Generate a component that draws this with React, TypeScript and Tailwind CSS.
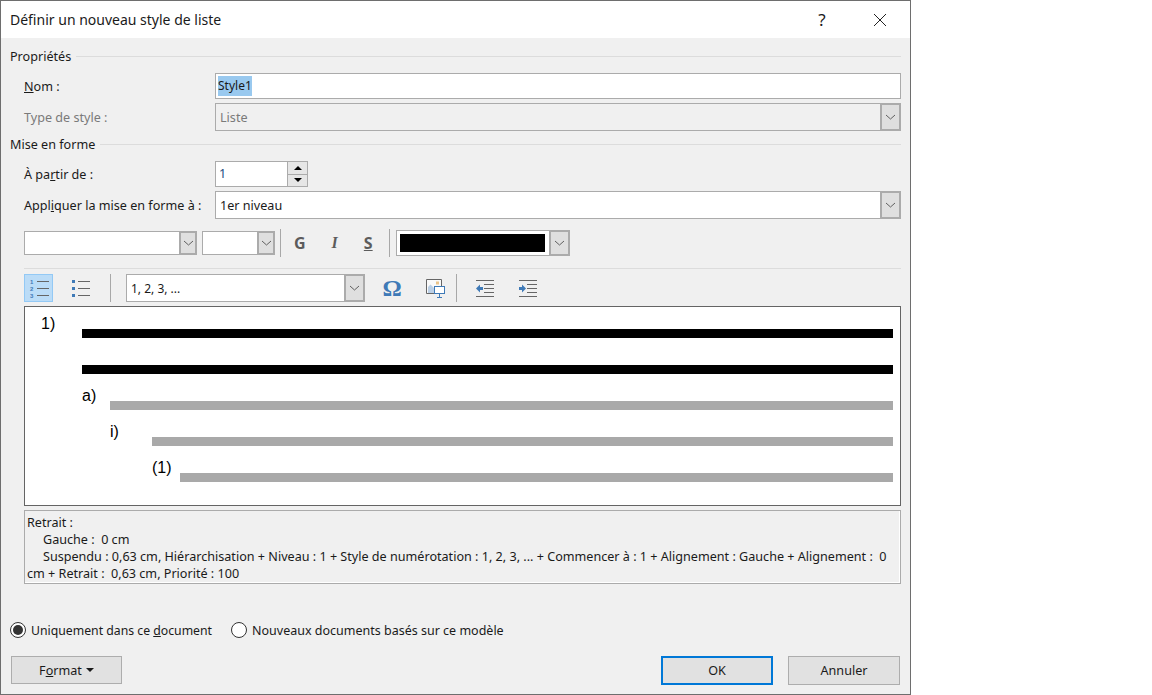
import React from "react";

const font = "[font-family:'Noto_Sans',sans-serif]";

const Chevron = () => (
    <svg width="11" height="6" viewBox="0 0 11 6" fill="none">
        <path d="M1 1l4.5 4L10 1" stroke="#606060" strokeWidth="1" />
    </svg>
);

const Combo = ({
    value,
    className = "",
    disabled = false,
    btn = "w-[20px]",
}: {
    value?: React.ReactNode;
    className?: string;
    disabled?: boolean;
    btn?: string;
}) => (
    <div
        className={`flex items-stretch border border-[#ababab] ${
            disabled ? "bg-[#f0f0f0] text-[#7a7a7a]" : "bg-white text-[#1a1a1a]"
        } ${className}`}
    >
        <div className="flex flex-1 items-center pl-[4px] pt-[2px] min-w-0 truncate">{value}</div>
        <div
            className={`flex items-center justify-center bg-[#dfdfdf] border-l-2 border-y border-r border-[#ababab] ${btn}`}
        >
            <Chevron />
        </div>
    </div>
);

const GroupHeader = ({ title, mt }: { title: string; mt: string }) => (
    <div className={`flex items-center h-[18px] gap-[5px] ${mt}`}>
        <span className="text-[#1a1a1a] pt-[2px]">{title}</span>
        <div className="flex-1 h-px bg-[#dcdcdc]" />
    </div>
);

const VSep = ({ h = "h-[28px]" }: { h?: string }) => <div className={`w-px bg-[#a8a8a8] ${h}`} />;

const Radio = ({ checked }: { checked?: boolean }) => (
    <div className="flex items-center justify-center w-[16px] h-[16px] rounded-full border border-[#333] bg-white">
        {checked && <div className="w-[10px] h-[10px] rounded-full bg-[#333]" />}
    </div>
);

const NumberedIcon = () => (
    <svg width="24" height="22" viewBox="0 0 24 22" fill="none">
        <text x="3" y="6.5" fontSize="6" fontWeight="700" fill="#3f7ab7" fontFamily="Liberation Sans">1</text>
        <text x="3" y="13.5" fontSize="6" fontWeight="700" fill="#3f7ab7" fontFamily="Liberation Sans">2</text>
        <text x="3" y="20.5" fontSize="6" fontWeight="700" fill="#3f7ab7" fontFamily="Liberation Sans">3</text>
        <path d="M10 4.5h12M10 11.5h12M10 18.5h12" stroke="#666" />
    </svg>
);

const BulletIcon = () => (
    <svg width="20" height="22" viewBox="0 0 20 22" fill="none">
        <path d="M1 3h3v3H1zM1 10h3v3H1zM1 17h3v3H1z" fill="#3f7ab7" />
        <path d="M7 4.5h12M7 11.5h12M7 18.5h12" stroke="#666" />
    </svg>
);

const PictureIcon = () => (
    <svg width="19" height="19" viewBox="0 0 19 19" fill="none">
        <path d="M.5.5h15v14H.5z" fill="#fafafa" stroke="#666" />
        <path d="M2 14V8l2.5-2.5L7 8l1 1v5z" fill="#bcd0e6" />
        <rect x="10" y="2.5" width="3" height="3" fill="#eac48a" />
        <rect x="8.5" y="7.5" width="10" height="7" fill="#fff" stroke="#3f7ab7" />
        <path d="M13.5 15v3M11 18.5h5" stroke="#3f7ab7" />
    </svg>
);

const IndentIcon = ({ flip }: { flip?: boolean }) => (
    <svg width="18" height="17" viewBox="0 0 18 17" fill="none">
        <path d="M0 .5h18M8 4.5h10M8 8.5h10M8 12.5h10M0 16.5h18" stroke="#666" />
        {flip ? (
            <path d="M0 7h3V4.5L7 8.5l-4 4V10H0z" fill="#3f7ab7" />
        ) : (
            <path d="M7 7H4V4.5L0 8.5l4 4V10h3z" fill="#3f7ab7" />
        )}
    </svg>
);

const PreviewRow = ({
    label,
    labelBox,
    bar,
}: {
    label: string;
    labelBox: string;
    bar: string;
}) => (
    <div className="flex h-[27px]">
        <div className={`${labelBox} h-[26px] leading-[26px] text-[16px] text-black [font-family:'Liberation_Sans',sans-serif]`}>
            {label}
        </div>
        <div className={`flex-1 h-[9px] self-end ${bar}`} />
    </div>
);

export default function App() {
    return (
        <div className={`w-[1152px] h-[695px] bg-white text-[12.6px] ${font}`}>
            <div className="flex flex-col w-[911px] h-[695px] border border-[#6e6e6e] bg-[#f0f0f0] text-[#1a1a1a]">
                <div className="flex items-center justify-between h-[37px] shrink-0 bg-white pl-[9px]">
                    <span className="text-[14px]">Définir un nouveau style de liste</span>
                    <div className="flex items-center">
                        <span className="text-[17px] w-[18px] text-center">?</span>
                        <svg className="ml-[42px] mr-[23px]" width="14" height="14" viewBox="0 0 14 14" fill="none">
                            <path d="M1 1l12 12M13 1L1 13" stroke="#222" />
                        </svg>
                    </div>
                </div>

                <div className="flex flex-col flex-1 pl-[9px] pr-[9px]">
                    <GroupHeader title="Propriétés" mt="mt-[9px]" />

                    <div className="flex items-center h-[26px] mt-[8px] pl-[14px]">
                        <span className="w-[191px] pt-[2px]">
                            <span className="underline">N</span>om :
                        </span>
                        <div className="flex flex-1 items-center h-full bg-white border border-[#ababab] pl-[2px]">
                            <span className="bg-[#99c9ef] h-[20px] leading-[20px] text-[12px]">Style1</span>
                        </div>
                    </div>

                    <div className="flex items-center h-[28px] mt-[4px] pl-[14px]">
                        <span className="w-[191px] pt-[2px] text-[#7a7a7a]">Type de style :</span>
                        <Combo value="Liste" disabled className="flex-1 h-full" />
                    </div>

                    <GroupHeader title="Mise en forme" mt="mt-[4px]" />

                    <div className="flex items-center h-[26px] mt-[8px] pl-[14px]">
                        <span className="w-[191px] pt-[2px]">
                            À pa<span className="underline">r</span>tir de :
                        </span>
                        <div className="flex w-[93px] h-full bg-white border border-[#ababab]">
                            <div className="flex flex-1 items-center pl-[3px] text-[#24507f]">1</div>
                            <div className="flex flex-col w-[20px] border-l border-[#ababab]">
                                <div className="flex flex-1 items-center justify-center bg-[#e6e6e6] border-b border-[#ababab]">
                                    <div className="w-0 h-0 border-x-[4px] border-x-transparent border-b-[4px] border-b-black" />
                                </div>
                                <div className="flex flex-1 items-center justify-center bg-[#e6e6e6]">
                                    <div className="w-0 h-0 border-x-[4px] border-x-transparent border-t-[4px] border-t-black" />
                                </div>
                            </div>
                        </div>
                    </div>

                    <div className="flex items-center h-[28px] mt-[4px] pl-[14px]">
                        <span className="w-[191px] pt-[2px]">
                            Appl<span className="underline">i</span>quer la mise en forme à :
                        </span>
                        <Combo value="1er niveau" className="flex-1 h-full" />
                    </div>

                    <div className="flex items-center h-[26px] mt-[11px] pl-[14px]">
                        <Combo className="w-[173px] h-[24px]" btn="w-[17px]" />
                        <Combo className="w-[73px] h-[24px] ml-[5px]" btn="w-[17px]" />
                        <div className="ml-[5px]">
                            <VSep />
                        </div>
                        <div className="flex items-center w-[108px] pl-[13px] gap-[26px] text-[16px] font-bold text-[#5c5c5c]">
                            <span>G</span>
                            <span className="italic [font-family:'Liberation_Serif',serif]">I</span>
                            <span className="underline">S</span>
                        </div>
                        <VSep />
                        <Combo
                            className="w-[174px] h-[26px] ml-[6px]"
                            btn="w-[20px]"
                            value={<div className="w-[145px] h-[18px] bg-black ml-[-1px] mt-[-2px]" />}
                        />
                    </div>

                    <div className="h-px bg-[#dcdcdc] mt-[12px] ml-[14px]" />

                    <div className="flex items-center h-[28px] mt-[5px] pl-[14px]">
                        <div className="flex items-center justify-center w-[29px] h-full bg-[#bbdcf7] border border-[#93c9f5]">
                            <NumberedIcon />
                        </div>
                        <div className="flex justify-center w-[57px] pr-[1px]">
                            <BulletIcon />
                        </div>
                        <VSep />
                        <Combo
                            className="w-[239px] h-full ml-[15px]"
                            btn="w-[20px]"
                            value={<span className="text-[#1a1a1a] text-[12px]">1, 2, 3, ...</span>}
                        />
                        <span className="w-[54px] text-center text-[24px] leading-none font-bold text-[#3f7ab7] [font-family:'Liberation_Serif',serif]">
                            Ω
                        </span>
                        <div className="flex w-[37px] pl-[7px]">
                            <PictureIcon />
                        </div>
                        <VSep />
                        <div className="flex items-center ml-[19px] gap-[25px]">
                            <IndentIcon />
                            <IndentIcon flip />
                        </div>
                    </div>

                    <div className="flex flex-col gap-[9px] h-[200px] mt-[4px] ml-[14px] pt-[4px] pr-[7px] bg-white border border-[#646464]">
                        <PreviewRow label="1)" labelBox="w-[57px] pl-[16px]" bar="bg-black" />
                        <PreviewRow label="" labelBox="w-[57px]" bar="bg-black" />
                        <div className="pl-[57px]">
                            <PreviewRow label="a)" labelBox="w-[28px]" bar="bg-[#a9a9a9]" />
                        </div>
                        <div className="pl-[85px]">
                            <PreviewRow label="i)" labelBox="w-[42px]" bar="bg-[#a9a9a9]" />
                        </div>
                        <div className="pl-[127px]">
                            <PreviewRow label="(1)" labelBox="w-[28px]" bar="bg-[#a9a9a9]" />
                        </div>
                    </div>

                    <div className="h-[74px] mt-[4px] ml-[14px] pl-[2px] pt-[3px] border border-[#ababab] shadow-[inset_-1px_-1px_0_#fff] leading-[17px] whitespace-nowrap">
                        <div>Retrait :</div>
                        <div className="pl-[16px]">Gauche :&nbsp; 0 cm</div>
                        <div className="pl-[16px]">
                            Suspendu : 0,63 cm, Hiérarchisation + Niveau : 1 + Style de numérotation : 1, 2, 3, ... + Commencer à : 1 + Alignement : Gauche + Alignement :&nbsp; 0
                        </div>
                        <div>cm + Retrait :&nbsp; 0,63 cm, Priorité : 100</div>
                    </div>

                    <div className="flex items-center h-[18px] mt-[37px]">
                        <Radio checked />
                        <span className="ml-[5px] pt-[2px] text-[12.25px]">
                            Uniquement dans ce <span className="underline">d</span>ocument
                        </span>
                        <div className="ml-[19px]">
                            <Radio />
                        </div>
                        <span className="ml-[5px] pt-[2px] text-[12.5px]">Nouveaux documents basés sur ce modèle</span>
                    </div>

                    <div className="flex items-center h-[30px] mt-[16px] pr-px">
                        <div className="flex items-center justify-center gap-[4px] w-[111px] h-[28px] ml-px bg-[#e1e1e1] border border-[#adadad]">
                            <span className="pt-[2px]">
                                F<span className="underline">o</span>rmat
                            </span>
                            <div className="w-0 h-0 border-x-[4px] border-x-transparent border-t-[4px] border-t-[#1a1a1a]" />
                        </div>
                        <div className="flex items-center justify-center w-[112px] h-[29px] ml-auto pt-[2px] bg-[#e1e1e1] border-2 border-[#0078d7]">
                            OK
                        </div>
                        <div className="flex items-center justify-center w-[112px] h-[29px] ml-[15px] pt-[2px] bg-[#e1e1e1] border border-[#adadad]">
                            Annuler
                        </div>
                    </div>
                </div>
            </div>
        </div>
    );
}
